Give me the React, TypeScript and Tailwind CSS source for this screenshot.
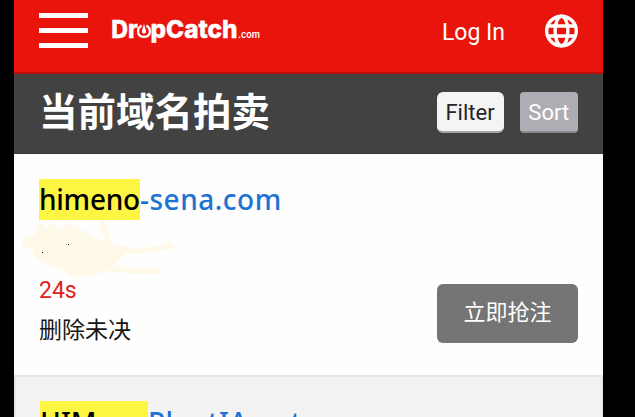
import React from "react";

const Globe = () => (
  <svg width="33" height="34" viewBox="0 0 33 34" fill="none" stroke="#fff" strokeWidth="3.4">
    <circle cx="16.5" cy="17" r="14.8" />
    <ellipse cx="16.5" cy="17" rx="6.4" ry="14.8" />
    <path d="M3.5 12H29.5M3.5 22H29.5" />
  </svg>
);

const Logo = () => (
  <svg className="overflow-visible" width="152" height="40" viewBox="0 -4 152 40" fill="#fff" stroke="#fff" strokeWidth="0">
    <g fontFamily="Inter, sans-serif" fontWeight="800" fontSize="24.5" strokeWidth="0.4">
      <text x="0.3" y="22.5" textLength="26.5" lengthAdjust="spacingAndGlyphs">Dr</text>
      <text x="39.5" y="22.5" textLength="87" lengthAdjust="spacingAndGlyphs">pCatch</text>
    </g>
    <path d="M30.6 10.5C25.2 14 26 21.7 33 21.9C40 21.7 40.8 14 35.4 10.5" fill="none" strokeWidth="2.3" />
    <path d="M33 8.5C32.6 12 30.9 13.8 30.9 16.6A2.1 2.1 0 0 0 35.1 16.6C35.1 13.8 33.4 12 33 8.5Z" />
    <text x="127" y="23" fontFamily="Inter, sans-serif" fontWeight="600" fontSize="9.5" textLength="22" lengthAdjust="spacingAndGlyphs">.com</text>
  </svg>
);

const Scribble = () => (
  <svg className="block" width="155" height="60" viewBox="20 220 155 60" fill="none" stroke="#fff9ea" strokeLinecap="round" strokeLinejoin="round">
    <path fill="#fff9ea" strokeWidth="6" d="M24 243L28 238 38 239 40 226 48 232 53 226 62 233 69 226 84 234 95 240 108 247 122 253 110 265 96 272 82 272 76 275 63 267 48 261 38 257 36 249Z" />
    <path strokeWidth="6" d="M70 227Q91 243 120 249Q143 254 170 245M102 224Q108 235 108 246M109 268Q137 272 159 271" />
    <path stroke="none" fill="#000" d="M42 252h1v1h-1zM68 244h1v1h-1z" />
  </svg>
);

export default function App() {
  return (
    <div className="h-[417px] w-[635px] overflow-hidden bg-black pr-8 pl-3.5 font-[Roboto,'Noto_Sans_CJK_SC',sans-serif]">
      <header className="flex h-[74px] items-start border-b-2 border-[#bd1109] bg-[#e9150c] pr-[25px] pl-[25px] text-white">
        <div className="flex w-[49px] shrink-0 flex-col gap-2.5 pt-[13px]">
          <span className="h-[5px] bg-white" />
          <span className="h-[5px] bg-white" />
          <span className="h-[5px] bg-white" />
        </div>
        <div className="ml-[23px] pt-[11px]"><Logo /></div>
        <a className="mt-[17px] mr-10 ml-auto text-[23px] leading-8">Log In</a>
        <div className="pt-[14px]"><Globe /></div>
      </header>
      <section className="flex h-20 items-start border-b border-[#383838] bg-[#424242] pr-[25px] pl-[25px] pt-[18px]">
        <h1 className="mr-auto -mt-px text-[38.5px] leading-[44px] font-bold text-white">当前域名拍卖</h1>
        <button className="h-[41px] w-[67px] rounded-md border-b-2 border-[#a8a8a8] bg-[#f4f4f4] pt-px text-[22px] text-[#222529]">Filter</button>
        <button className="ml-4 h-[41px] w-[58.5px] rounded-[4px] border-b-2 border-[#8b8992] bg-[#afadb4] pt-px text-[22px] text-white">Sort</button>
      </section>
      <article className="flex h-[221px] bg-[#fefefe] pr-[25px] pl-[25px]">
        <div className="flex flex-col items-start pt-[25px]">
          <h2 className="flex h-[41px] font-['Noto_Sans',sans-serif] text-[28px] leading-[40px] font-medium text-[#1d73d4]">
            <mark className="w-[101px] bg-[#fcf643] tracking-[-0.25px] text-black">himeno</mark>
            <span className="tracking-[0.5px]">-sena.com</span>
          </h2>
          <div className="-ml-[19px]"><Scribble /></div>
          <p className="-mt-[3px] text-[23px] leading-7 text-[#df211b]">24s</p>
          <p className="mt-2.5 text-[23px] leading-8 text-[#171717]">删除未决</p>
        </div>
        <button className="mt-[130px] ml-auto h-[59px] w-[141px] rounded-[6px] bg-[#757575] pb-0.5 text-[22px] text-white">立即抢注</button>
      </article>
      <article className="h-[42px] overflow-hidden border-2 border-b-0 border-[#e6e6e6] bg-[#f3f3f3] pt-6 pl-6">
        <h2 className="flex h-[41px] font-['Noto_Sans',sans-serif] text-[28px] leading-[43px] font-medium text-[#1d73d4]">
          <mark className="w-[108px] bg-[#fcf643] text-black">HIMeno</mark>
          <span className="tracking-[0.4px]">PlantIA.net</span>
        </h2>
      </article>
    </div>
  );
}
